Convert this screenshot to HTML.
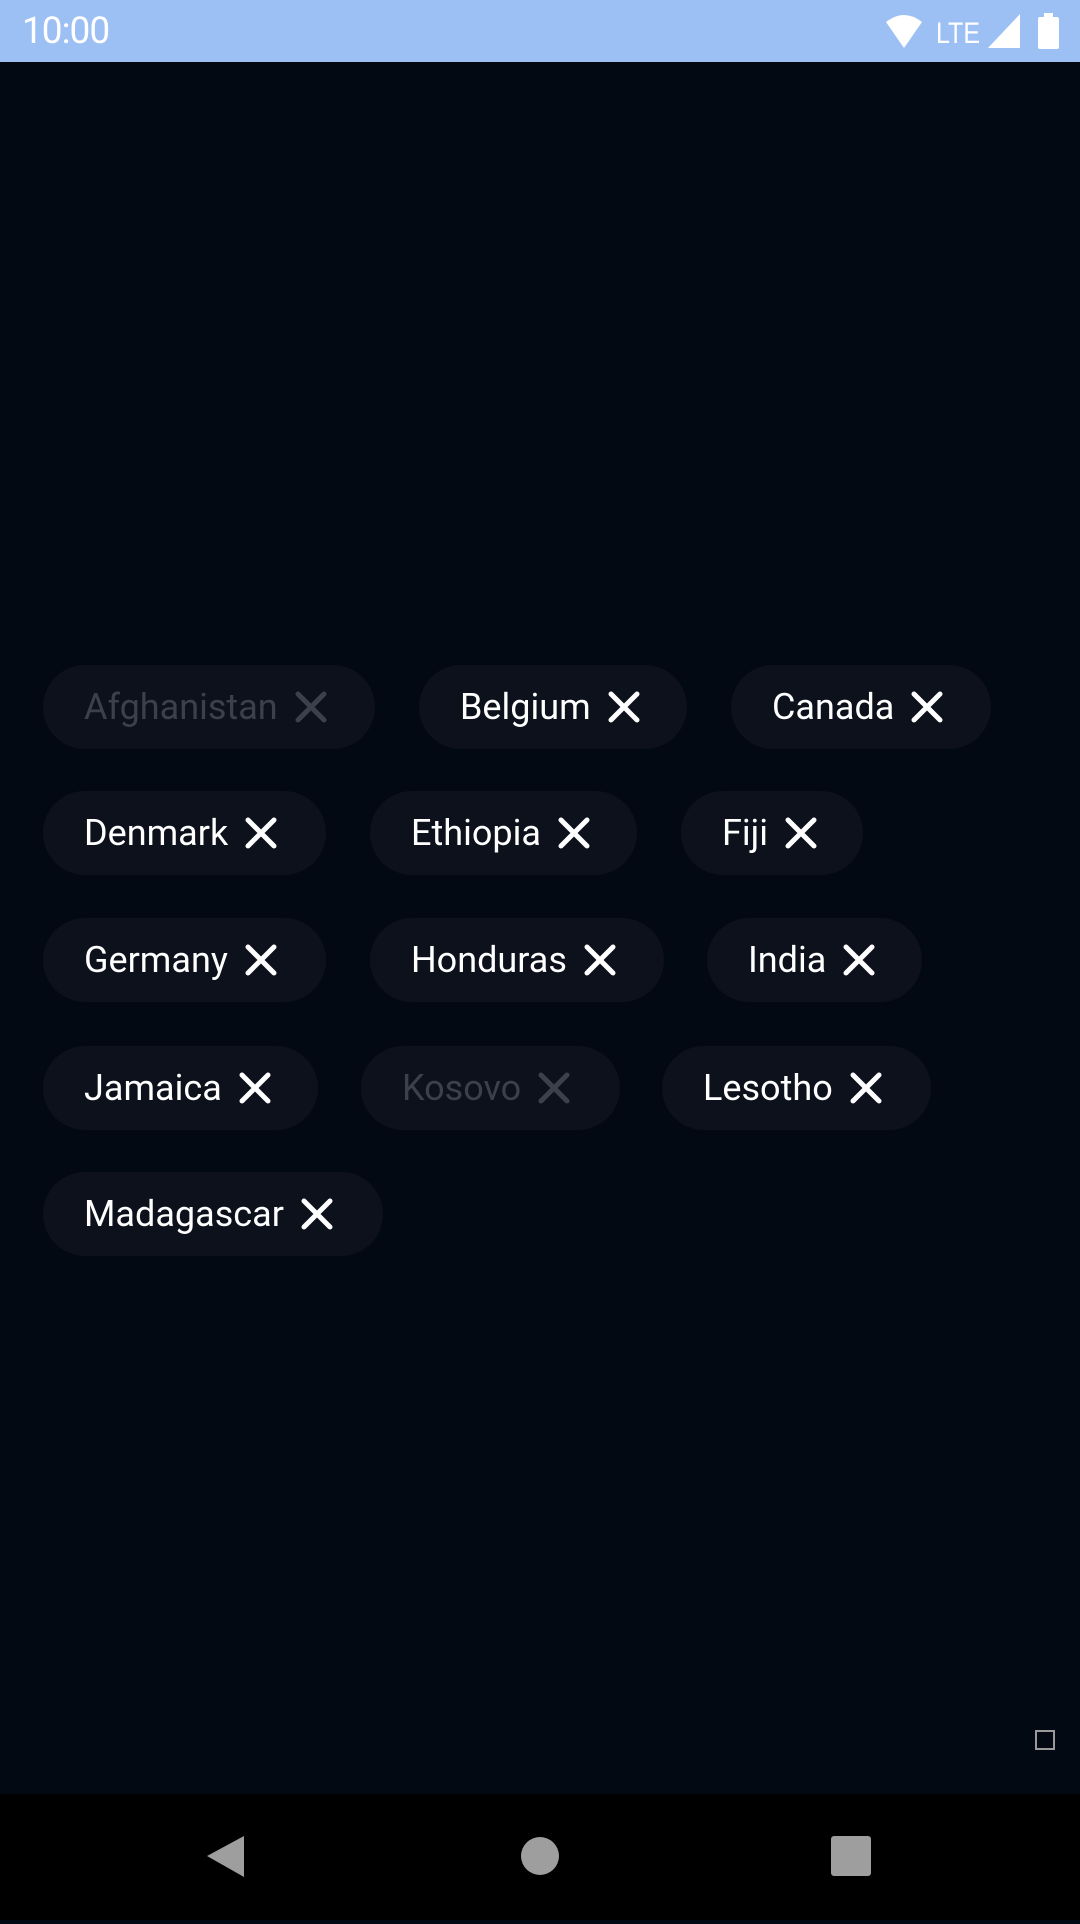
<!DOCTYPE html>
<html><head><meta charset="utf-8"><style>
*{margin:0;padding:0;box-sizing:border-box}
body{width:1080px;height:1920px;background:#030912;position:relative;overflow:hidden;font-family:"Roboto","Liberation Sans",sans-serif}
.sb{position:absolute;left:0;top:0;width:1080px;height:62px;background:#9dc0f4}
.time{position:absolute;left:22px;top:10px;font-size:37px;color:#fff;letter-spacing:-1px}
.chip{position:absolute;height:84px;border-radius:42px;background:#0c111c;color:#fff;font-size:36px;display:flex;align-items:center;padding-left:41px;white-space:nowrap}
.chip svg{margin-left:16px}
.dis{color:#3b404a}
.nav{position:absolute;left:0;top:1794px;width:1080px;height:126px;background:#000}
</style></head><body>
<div class="sb"><div class="time">10:00</div>
<svg style="position:absolute;left:880px;top:12px" width="190" height="40">
<path d="M6 10 Q24 -4 42 10 L24 36 Z" fill="#fff"/>
<text x="56" y="31" font-size="30" fill="#fff" font-family="Liberation Sans" textLength="44" lengthAdjust="spacingAndGlyphs">LTE</text>
<path d="M108 36 L140 2 L140 36 Z" fill="#fff"/>
<rect x="158" y="5" width="21" height="32" rx="2" fill="#fff"/><rect x="164" y="1" width="9" height="5" fill="#fff"/>
</svg></div>

<div class="chip dis" style="left:43px;top:665px;width:332px">Afghanistan<svg width="34" height="34" viewBox="0 0 34 34"><path d="M4 4L30 30M30 4L4 30" stroke="#3b404a" stroke-width="5" stroke-linecap="round"/></svg></div>
<div class="chip" style="left:419px;top:665px;width:268px">Belgium<svg width="34" height="34" viewBox="0 0 34 34"><path d="M4 4L30 30M30 4L4 30" stroke="#fff" stroke-width="5" stroke-linecap="round"/></svg></div>
<div class="chip" style="left:731px;top:665px;width:260px">Canada<svg width="34" height="34" viewBox="0 0 34 34"><path d="M4 4L30 30M30 4L4 30" stroke="#fff" stroke-width="5" stroke-linecap="round"/></svg></div>

<div class="chip" style="left:43px;top:791px;width:283px">Denmark<svg width="34" height="34" viewBox="0 0 34 34"><path d="M4 4L30 30M30 4L4 30" stroke="#fff" stroke-width="5" stroke-linecap="round"/></svg></div>
<div class="chip" style="left:370px;top:791px;width:267px">Ethiopia<svg width="34" height="34" viewBox="0 0 34 34"><path d="M4 4L30 30M30 4L4 30" stroke="#fff" stroke-width="5" stroke-linecap="round"/></svg></div>
<div class="chip" style="left:681px;top:791px;width:182px">Fiji<svg width="34" height="34" viewBox="0 0 34 34"><path d="M4 4L30 30M30 4L4 30" stroke="#fff" stroke-width="5" stroke-linecap="round"/></svg></div>

<div class="chip" style="left:43px;top:918px;width:283px">Germany<svg width="34" height="34" viewBox="0 0 34 34"><path d="M4 4L30 30M30 4L4 30" stroke="#fff" stroke-width="5" stroke-linecap="round"/></svg></div>
<div class="chip" style="left:370px;top:918px;width:294px">Honduras<svg width="34" height="34" viewBox="0 0 34 34"><path d="M4 4L30 30M30 4L4 30" stroke="#fff" stroke-width="5" stroke-linecap="round"/></svg></div>
<div class="chip" style="left:707px;top:918px;width:215px">India<svg width="34" height="34" viewBox="0 0 34 34"><path d="M4 4L30 30M30 4L4 30" stroke="#fff" stroke-width="5" stroke-linecap="round"/></svg></div>

<div class="chip" style="left:43px;top:1046px;width:275px">Jamaica<svg width="34" height="34" viewBox="0 0 34 34"><path d="M4 4L30 30M30 4L4 30" stroke="#fff" stroke-width="5" stroke-linecap="round"/></svg></div>
<div class="chip dis" style="left:361px;top:1046px;width:259px">Kosovo<svg width="34" height="34" viewBox="0 0 34 34"><path d="M4 4L30 30M30 4L4 30" stroke="#3b404a" stroke-width="5" stroke-linecap="round"/></svg></div>
<div class="chip" style="left:662px;top:1046px;width:269px">Lesotho<svg width="34" height="34" viewBox="0 0 34 34"><path d="M4 4L30 30M30 4L4 30" stroke="#fff" stroke-width="5" stroke-linecap="round"/></svg></div>

<div class="chip" style="left:43px;top:1172px;width:340px">Madagascar<svg width="34" height="34" viewBox="0 0 34 34"><path d="M4 4L30 30M30 4L4 30" stroke="#fff" stroke-width="5" stroke-linecap="round"/></svg></div>

<div style="position:absolute;left:1035px;top:1730px;width:20px;height:20px;border:2px solid #9a9a9a"></div>

<div class="nav"><svg width="1080" height="126">
<path d="M244 42 L244 83 L207 62 Z" fill="#9e9e9e"/>
<circle cx="540" cy="62" r="19" fill="#9e9e9e"/>
<rect x="831" y="42" width="40" height="40" rx="3" fill="#9e9e9e"/>
</svg></div>
</body></html>
